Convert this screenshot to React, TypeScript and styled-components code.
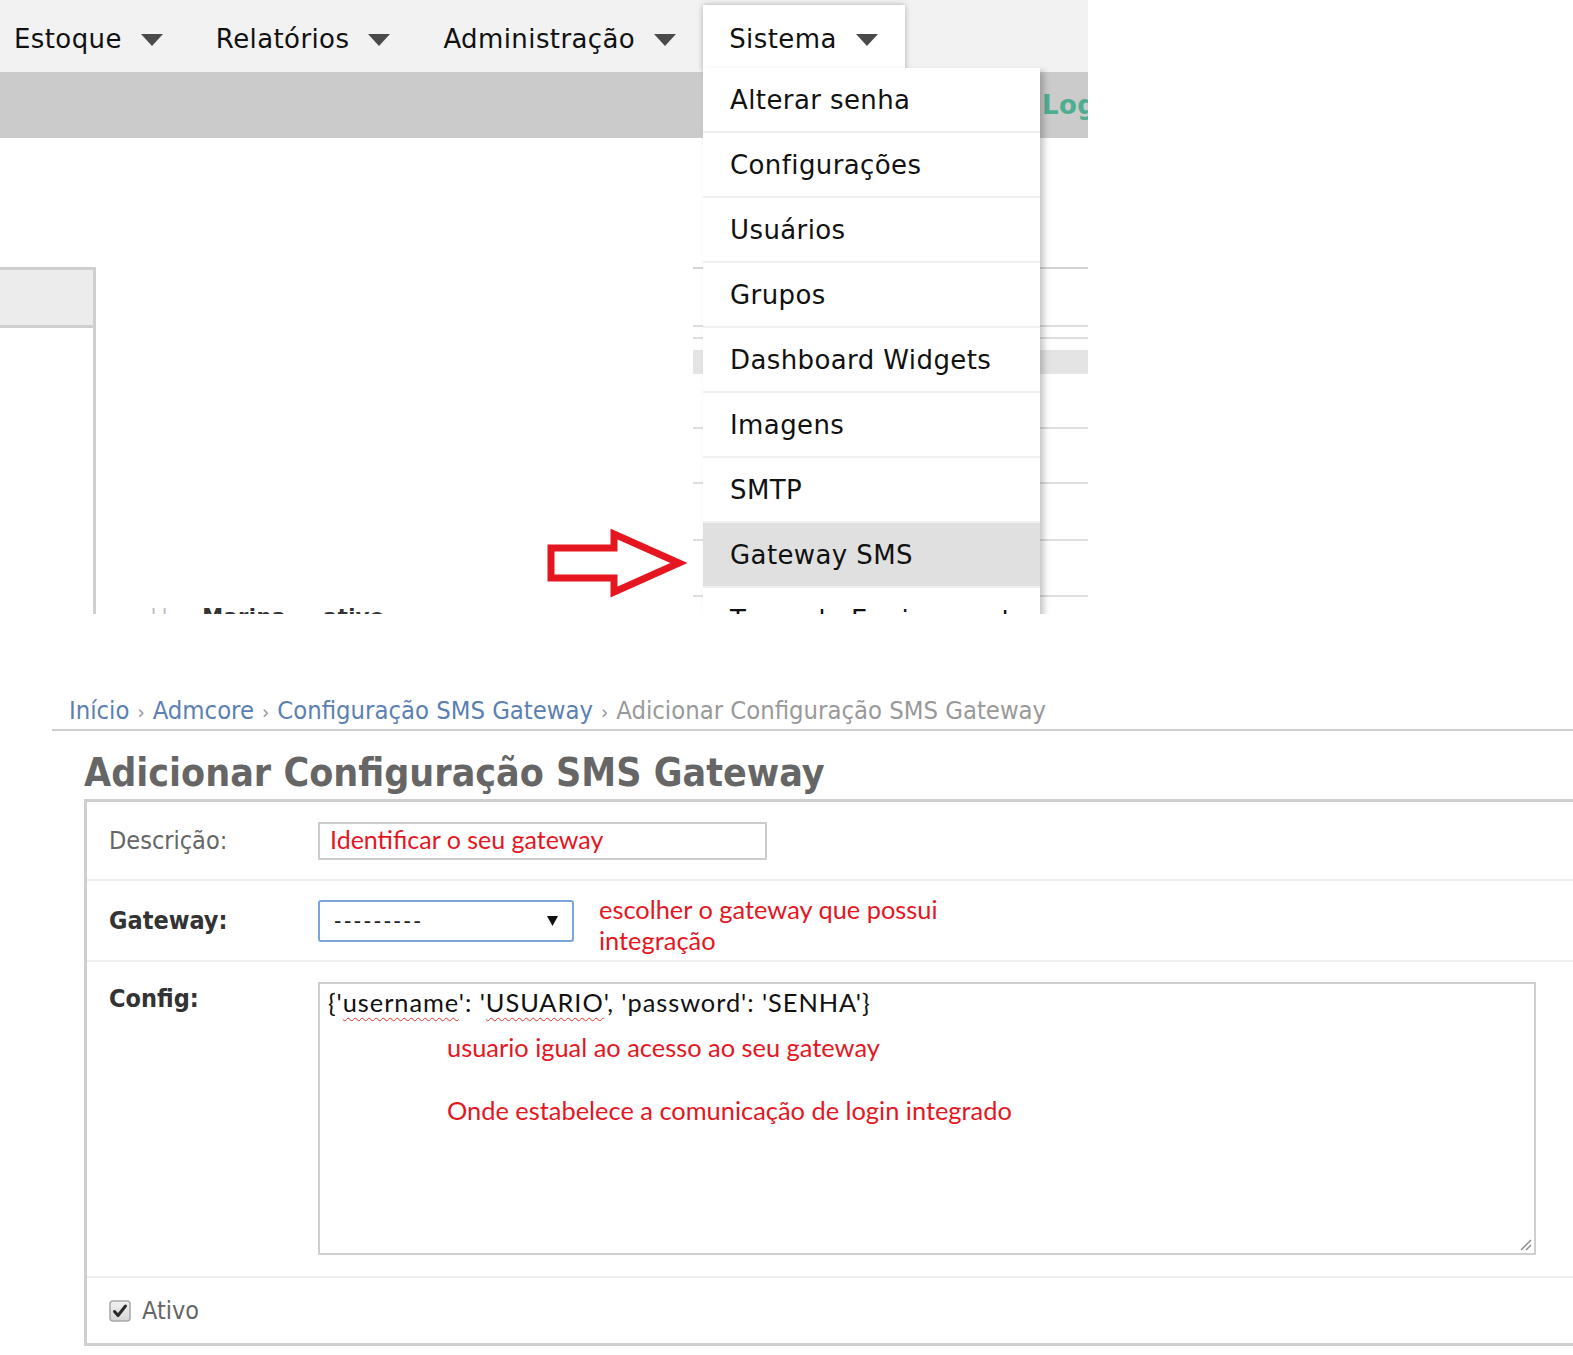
import React from 'react';
import styled, { createGlobalStyle } from 'styled-components';

const GlobalStyle = createGlobalStyle`
  html, body {
    margin: 0;
    padding: 0;
    background: #fff;
  }
  body {
    overflow-x: hidden;
    font-family: "DejaVu Sans", Verdana, sans-serif;
  }
`;

const adminFont = `"DejaVu Sans Condensed", "DejaVu Sans", Verdana, sans-serif`;
const noteFont = `Lato, "Open Sans", sans-serif`;
const noteRed = '#e5161f';

/* ---------- top screenshot: menu ---------- */

const TopShot = styled.div`
  position: relative;
  width: 1088px;
  height: 614px;
  overflow: hidden;
  background: #fff;
  font-family: "DejaVu Sans", Verdana, sans-serif;
  font-size: 26px;
  letter-spacing: 0.4px;
  color: #111;
`;

const NavBar = styled.nav`
  display: flex;
  align-items: stretch;
  height: 72px;
  box-sizing: border-box;
  padding-top: 5px;
  background: #f2f2f2;
`;

const NavItem = styled.div<{ $active?: boolean }>`
  position: relative;
  z-index: 2;
  display: flex;
  align-items: center;
  padding: 0 27px 0 26px;
  white-space: nowrap;
  background: ${(p) => (p.$active ? '#fff' : 'transparent')};
  box-shadow: ${(p) => (p.$active ? '0 0 6px rgba(0, 0, 0, 0.28)' : 'none')};

  &:first-child {
    padding-left: 14px;
  }

  svg {
    margin-left: 19px;
    margin-top: 2px;
  }
`;

const SubBar = styled.div`
  height: 66px;
  box-sizing: border-box;
  padding-left: 1042px;
  display: flex;
  align-items: center;
  background: #cbcbcb;
  color: #4fae92;
  font-weight: bold;
  white-space: nowrap;
`;

const Body = styled.div`
  display: flex;
  height: 476px;
`;

const Sidebar = styled.aside`
  width: 96px;
  flex: none;
  margin-top: 129px;
  box-sizing: border-box;
  border-top: 3px solid #cfcfcf;
  border-right: 3px solid #cfcfcf;
`;

const SidebarHead = styled.div`
  height: 55px;
  background: #ececec;
  border-bottom: 3px solid #cfcfcf;
`;

const MainArea = styled.div`
  flex: 1;
  padding: 465px 0 0 54px;
`;

const ListRow = styled.div`
  display: flex;
  align-items: center;
  gap: 30px;
  font-size: 21px;
  line-height: 28px;
  font-weight: bold;
  color: #333;
  white-space: nowrap;
`;

const RowMark = styled.span`
  color: #bbb;
  font-weight: normal;
  letter-spacing: 4px;
`;

const BgTable = styled.div`
  width: 395px;
  flex: none;
  margin-top: 129px;
  border-top: 2px solid #d4d4d4;
`;

const BgRow = styled.div<{ $h: number; $band?: boolean; $line?: boolean }>`
  height: ${(p) => p.$h}px;
  background: ${(p) => (p.$band ? '#e4e4e4' : '#fff')};
  border-bottom: ${(p) => (p.$line ? '2px solid #dedede' : 'none')};
`;

const Dropdown = styled.ul`
  position: absolute;
  z-index: 3;
  left: 703px;
  top: 68px;
  width: 337px;
  margin: 0;
  padding: 0;
  list-style: none;
  background: #fff;
  box-shadow: 4px 3px 6px rgba(0, 0, 0, 0.22);
`;

const MenuItem = styled.li<{ $active?: boolean }>`
  height: 65px;
  box-sizing: border-box;
  display: flex;
  align-items: center;
  padding-left: 27px;
  border-bottom: 2px solid #f0f0f0;
  white-space: nowrap;
  background: ${(p) => (p.$active ? '#e0e0e0' : '#fff')};
`;

const ArrowMark = styled.svg`
  position: absolute;
  z-index: 4;
  left: 545px;
  top: 529px;
`;

/* ---------- bottom screenshot: admin form ---------- */

const BottomShot = styled.div`
  margin-top: 66px;
  font-family: ${adminFont};
`;

const Breadcrumbs = styled.div`
  margin-left: 52px;
  padding: 14px 0 1px 17px;
  line-height: 32px;
  font-size: 25.4px;
  color: #999;
  border-bottom: 2px solid #cfcfcf;
  white-space: nowrap;

  a {
    color: #5b80b2;
    text-decoration: none;
  }
`;

const Sep = styled.span`
  margin: 0 8px;
  font-size: 20px;
  color: #999;
`;

const Title = styled.h1`
  margin: 0 0 5px 84px;
  padding-top: 21px;
  font-size: 39px;
  line-height: 42px;
  font-weight: bold;
  color: #666;
  white-space: nowrap;
`;

const Module = styled.fieldset`
  margin: 0 0 0 84px;
  padding: 0;
  border: none;
  border-top: 3px solid #cfcfcf;
  border-left: 3px solid #cfcfcf;
  border-bottom: 3px solid #cfcfcf;
`;

const FormRow = styled.div<{ $h?: number; $top?: boolean }>`
  display: flex;
  align-items: ${(p) => (p.$top ? 'flex-start' : 'center')};
  box-sizing: border-box;
  min-height: ${(p) => (p.$h ? `${p.$h}px` : 'auto')};
  padding: ${(p) => (p.$top ? '20px 22px 21px' : '0 22px')};
  border-bottom: 2px solid #eeeeee;

  &:last-child {
    border-bottom: none;
  }
`;

const Label = styled.label<{ $required?: boolean }>`
  width: 209px;
  flex: none;
  font-size: 25px;
  line-height: 34px;
  color: ${(p) => (p.$required ? '#333' : '#666')};
  font-weight: ${(p) => (p.$required ? 'bold' : 'normal')};
`;

const TextInput = styled.div`
  width: 449px;
  height: 38px;
  box-sizing: border-box;
  border: 2px solid #cccccc;
  padding: 0 10px 3px;
  display: flex;
  align-items: center;
  font-family: ${noteFont};
  font-size: 25px;
  color: ${noteRed};
  white-space: nowrap;
`;

const Select = styled.div`
  width: 256px;
  height: 42px;
  box-sizing: border-box;
  border: 2px solid #7aa5dc;
  border-radius: 3px;
  padding: 0 14px 0 14px;
  display: flex;
  align-items: center;
  justify-content: space-between;
  font-family: "Liberation Sans", Arial, sans-serif;
  font-size: 22px;
  letter-spacing: 2.6px;
  color: #222;
`;

const Note = styled.div`
  margin-left: 25px;
  margin-top: 8px;
  font-family: ${noteFont};
  font-size: 25.4px;
  line-height: 31px;
  color: ${noteRed};
`;

const ConfigBox = styled.div`
  position: relative;
  width: 1218px;
  height: 273px;
  box-sizing: border-box;
  border: 2px solid #cfcfcf;
  padding: 2px 8px;
  font-family: ${noteFont};
  font-size: 25.4px;
  line-height: 32px;
  color: #111;
  white-space: nowrap;
`;

const CodeLine = styled.div`
  letter-spacing: 0.95px;
`;

const Misspelled = styled.span`
  text-decoration: underline wavy #e0302a;
  text-decoration-thickness: 1px;
  text-underline-offset: 5px;
`;

const ConfigNote = styled.div<{ $gap: number }>`
  margin: ${(p) => p.$gap}px 0 0 119px;
  color: ${noteRed};
`;

const ResizeGrip = styled.svg`
  position: absolute;
  right: 2px;
  bottom: 2px;
`;

const CheckLabel = styled.label`
  display: flex;
  align-items: center;
  gap: 11px;
  font-size: 25px;
  line-height: 34px;
  color: #666;
`;

const Caret = () => (
  <svg width="22" height="12" viewBox="0 0 22 12">
    <polygon points="0,0 22,0 11,12" fill="#4a4a4a" />
  </svg>
);

const menuItems = [
  'Alterar senha',
  'Configurações',
  'Usuários',
  'Grupos',
  'Dashboard Widgets',
  'Imagens',
  'SMTP',
  'Gateway SMS',
  'Troca de Equipamento',
];

const bgRows = [
  { h: 56, line: true },
  { h: 10, line: true },
  { h: 11 },
  { h: 24, band: true },
  { h: 53, line: true },
  { h: 53, line: true },
  { h: 55, line: true },
  { h: 54, line: true },
];

const App = () => (
  <>
    <GlobalStyle />
    <TopShot>
      <NavBar>
        <NavItem>Estoque<Caret /></NavItem>
        <NavItem>Relatórios<Caret /></NavItem>
        <NavItem>Administração<Caret /></NavItem>
        <NavItem $active>Sistema<Caret /></NavItem>
      </NavBar>
      <SubBar>Logout</SubBar>
      <Body>
        <Sidebar>
          <SidebarHead />
        </Sidebar>
        <MainArea>
          <ListRow>
            <RowMark>||</RowMark>
            <span>Marina — ativo</span>
          </ListRow>
        </MainArea>
        <BgTable>
          {bgRows.map((r, i) => (
            <BgRow key={i} $h={r.h} $band={r.band} $line={r.line} />
          ))}
        </BgTable>
      </Body>
      <Dropdown>
        {menuItems.map((item) => (
          <MenuItem key={item} $active={item === 'Gateway SMS'}>{item}</MenuItem>
        ))}
      </Dropdown>
      <ArrowMark width="142" height="72" viewBox="0 0 142 72">
        <polygon
          points="6,19 69,19 69,5 134,34 69,63 69,49 6,49"
          fill="#fff"
          stroke="#e5161f"
          strokeWidth="7"
          strokeLinejoin="miter"
        />
      </ArrowMark>
    </TopShot>

    <BottomShot>
      <Breadcrumbs>
        <a href="#">Início</a>
        <Sep>›</Sep>
        <a href="#">Admcore</a>
        <Sep>›</Sep>
        <a href="#">Configuração SMS Gateway</a>
        <Sep>›</Sep>
        Adicionar Configuração SMS Gateway
      </Breadcrumbs>
      <Title>Adicionar Configuração SMS Gateway</Title>
      <Module>
        <FormRow $h={79}>
          <Label>Descrição:</Label>
          <TextInput>Identificar o seu gateway</TextInput>
        </FormRow>
        <FormRow $h={81}>
          <Label $required>Gateway:</Label>
          <Select>
            <span>---------</span>
            <svg width="11" height="11" viewBox="0 0 11 11">
              <polygon points="0,1 11,1 5.5,11" fill="#111" />
            </svg>
          </Select>
          <Note>
            escolher o gateway que possui
            <br />
            integração
          </Note>
        </FormRow>
        <FormRow $top>
          <Label $required>Config:</Label>
          <ConfigBox>
            <CodeLine>
              {"{'"}<Misspelled>username</Misspelled>{"': '"}<Misspelled>USUARIO</Misspelled>{"', 'password': 'SENHA'}"}
            </CodeLine>
            <ConfigNote $gap={13}>usuario igual ao acesso ao seu gateway</ConfigNote>
            <ConfigNote $gap={31}>Onde estabelece a comunicação de login integrado</ConfigNote>
            <ResizeGrip width="14" height="14" viewBox="0 0 14 14">
              <line x1="13" y1="3" x2="3" y2="13" stroke="#8a8a8a" strokeWidth="1.4" />
              <line x1="13" y1="8" x2="8" y2="13" stroke="#8a8a8a" strokeWidth="1.4" />
            </ResizeGrip>
          </ConfigBox>
        </FormRow>
        <FormRow $h={65}>
          <CheckLabel>
            <svg width="22" height="22" viewBox="0 0 22 22">
              <defs>
                <linearGradient id="cbg" x1="0" y1="0" x2="0" y2="1">
                  <stop offset="0" stopColor="#f2f2f2" />
                  <stop offset="1" stopColor="#d6d6d6" />
                </linearGradient>
              </defs>
              <rect x="1" y="1" width="20" height="20" rx="3" fill="url(#cbg)" stroke="#a8a8a8" strokeWidth="1.5" />
              <path d="M5.5 11.5 L9 15.5 L16.5 6" fill="none" stroke="#2b2b2b" strokeWidth="3" strokeLinecap="round" strokeLinejoin="round" />
            </svg>
            Ativo
          </CheckLabel>
        </FormRow>
      </Module>
    </BottomShot>
  </>
);

export default App;
